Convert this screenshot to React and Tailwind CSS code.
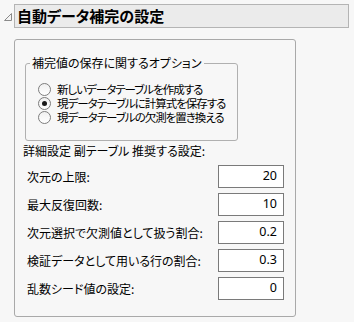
import React from "react";

const jp = "[font-family:'Noto_Sans_CJK_JP','Noto_Sans',sans-serif] [font-feature-settings:'palt']";

function Radio({ checked, label }) {
  return (
    <div className="flex items-center h-[14px] whitespace-nowrap">
      <span className="ml-[12px] shrink-0 w-[13px] h-[13px] rounded-full border border-[#7d7d7d] bg-[linear-gradient(#f0f0f0,#ffffff)] flex items-center justify-center">
        {checked && <span className="w-[5px] h-[5px] rounded-full bg-[#1a1a1a]" />}
      </span>
      <span className="ml-[6px] text-[11.5px] tracking-[-1px] leading-[14px] text-black whitespace-nowrap">{label}</span>
    </div>
  );
}

function Row({ label, value }) {
  return (
    <div className="flex items-center h-[23px] pl-[12px] pr-[11px]">
      <span className="text-[12px] leading-[16px] text-black whitespace-nowrap">{label}</span>
      <div className="ml-auto w-[66px] h-[23px] border border-[#7a7a7a] bg-white flex items-center justify-end pr-[6px] text-[12.5px] text-black [font-family:'Noto_Sans',sans-serif]">
        {value}
      </div>
    </div>
  );
}

export default function App() {
  return (
    <div className={`w-[354px] h-[322px] bg-[#f7f7f7] overflow-hidden ${jp}`}>
      <div className="flex items-center pt-[4px]">
        <div className="w-[14px] h-[24px] flex items-center justify-center">
          <svg width="10" height="10" viewBox="0 0 10 10" className="mt-[2px] ml-[2px]">
            <path d="M8.5 1.5 L8.5 8.5 L1.5 8.5 Z" fill="#f4f4f4" stroke="#8a8a8a" strokeWidth="1" />
          </svg>
        </div>
        <div className="w-[335px] h-[24px] bg-[#ebebeb] border border-[#b4b4b4] flex items-center pl-[2px]">
          <span className="text-[15px] font-bold leading-[20px] text-black whitespace-nowrap">自動データ補完の設定</span>
        </div>
      </div>
      <div className="ml-[14px] mt-[11px] w-[282px] h-[278px] border border-[#a9a9a9] rounded-[3px] flex flex-col">
        <fieldset className="ml-[10px] mt-[15px] w-[213px] h-[86px] border border-[#b0b0b0] rounded-[3px] pt-[11px]">
          <legend className="ml-[4px] px-[2px] text-[12px] leading-[16px] text-black whitespace-nowrap">補完値の保存に関するオプション</legend>
          <Radio label="新しいデータテーブルを作成する" />
          <Radio checked label="現データテーブルに計算式を保存する" />
          <Radio label="現データテーブルの欠測を置き換える" />
        </fieldset>
        <div className="ml-[8px] mt-[2px] text-[12px] leading-[16px] text-black whitespace-nowrap">詳細設定 副テーブル 推奨する設定:</div>
        <div className="mt-[6px] flex flex-col gap-[5px]">
          <Row label="次元の上限:" value="20" />
          <Row label="最大反復回数:" value="10" />
          <Row label="次元選択で欠測値として扱う割合:" value="0.2" />
          <Row label="検証データとして用いる行の割合:" value="0.3" />
          <Row label="乱数シード値の設定:" value="0" />
        </div>
      </div>
    </div>
  );
}
